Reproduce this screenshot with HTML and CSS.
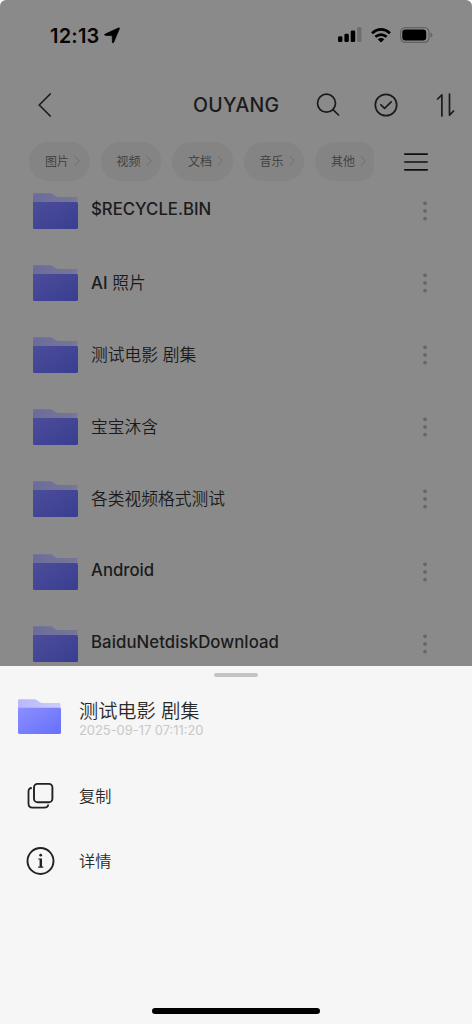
FILE: index.html
```html
<!DOCTYPE html>
<html lang="zh-CN">
<head>
<meta charset="utf-8">
<title>OUYANG</title>
<link rel="stylesheet" href="styles.css">
</head>
<body>
<svg width="0" height="0" class="defs" aria-hidden="true">
  <defs>
    <linearGradient id="dimFront" x1="0" y1="0" x2="1" y2="1"><stop offset="0" stop-color="#4c4d9a"/><stop offset="1" stop-color="#393e91"/></linearGradient>
    <linearGradient id="dimBack" x1="0" y1="0" x2="1" y2="0"><stop offset="0" stop-color="#6c6c9c"/><stop offset="1" stop-color="#777796"/></linearGradient>
    <linearGradient id="front" x1="0" y1="0" x2="1" y2="1"><stop offset="0" stop-color="#8c8eff"/><stop offset="1" stop-color="#6670fa"/></linearGradient>
    <linearGradient id="back" x1="0" y1="0" x2="1" y2="0"><stop offset="0" stop-color="#b7b8fa"/><stop offset="1" stop-color="#cccdfa"/></linearGradient>
    <symbol id="folder-dim" viewBox="0 0 45 36"><path fill="url(#dimBack)" d="M0 12V1.500Q0 .2 1.500 .2H17.500Q19 .2 20 1.200L22.500 3.200Q23.500 4 25 4H43.500Q44.500 4 44.500 5V12Z"/><path fill="url(#dimFront)" d="M0 9H43.500Q45 9 45 10.500V34.500Q45 36 43.500 36H1.500Q0 36 0 34.500Z"/></symbol>
    <symbol id="folder" viewBox="0 0 45 36"><path fill="url(#back)" d="M0 12V1.500Q0 .2 1.500 .2H17.500Q19 .2 20 1.200L22.500 3.200Q23.500 4 25 4H43.500Q44.500 4 44.500 5V12Z"/><path fill="url(#front)" d="M0 9H43.500Q45 9 45 10.500V34.500Q45 36 43.500 36H1.500Q0 36 0 34.500Z"/></symbol>
    <symbol id="chev" viewBox="0 0 6 12"><path d="M.8 1.200L5.200 6L.8 10.800" fill="none" stroke="#707070" stroke-width="1"/></symbol>
    <symbol id="dots" viewBox="0 0 4 20"><g fill="#676767"><circle cx="2" cy="2.300" r="1.900"/><circle cx="2" cy="10" r="1.900"/><circle cx="2" cy="17.600" r="1.900"/></g></symbol>
  </defs>
</svg>
<div class="phone">
  <div class="screen">
    <div class="status">
      <span class="time">12:13</span>
      <svg class="loc" width="16" height="17" viewBox="0 0 16 17"><path d="M14.400 1Q15.800 .4 15.300 1.900L9.600 15.400Q8.800 16.800 8.400 15.200L8.200 9.300Q8.200 8.600 7.500 8.600L1.300 8.400Q-.3 8 1.200 7.100Z" stroke="#000" stroke-width=".7" stroke-linejoin="round"/></svg>
      <span class="fill"></span>
      <svg class="signal" width="24" height="16" viewBox="0 0 24 16"><rect x="0" y="9.300" width="4.400" height="5.700" rx="1.300"/><rect x="6.400" y="6.800" width="4.400" height="8.200" rx="1.300"/><rect x="12.700" y="3.500" width="4.500" height="11.500" rx="1.300"/><rect x="19.200" y="0" width="4.200" height="15" rx="1.300" fill="#6d6d6d"/></svg>
      <svg class="wifi" width="20" height="15" viewBox="0 0 20 15"><g fill="none" stroke="#000" stroke-width="2.700"><path d="M1 5.200Q10-2.400 19 5.200"/><path d="M4.300 8.800Q10 4.400 15.700 8.800"/></g><path d="M6.700 11.300Q10 8.900 13.300 11.300L10.600 14Q10 14.500 9.400 14Z"/></svg>
      <svg class="battery" width="33" height="16" viewBox="0 0 33 16"><rect x=".6" y=".6" width="28.500" height="14.800" rx="4.800" fill="none" stroke="#636363" stroke-width="1.200"/><rect x="2.300" y="2.500" width="23.900" height="11" rx="3.200"/><path d="M30.500 5.500Q32.500 6.300 32.500 8T30.500 10.500Z" fill="#636363"/></svg>
    </div>
    <div class="nav">
      <svg class="back" width="14" height="24" viewBox="0 0 14 24"><path d="M12.200 1L1.200 12L12.200 23" class="line"/></svg>
      <h1 class="title">OUYANG</h1>
      <svg class="search" width="24" height="24" viewBox="0 0 24 24"><circle cx="10.500" cy="10.200" r="9" class="line"/><path d="M17 16.700L22.500 22" class="line"/></svg>
      <svg class="check" width="24" height="24" viewBox="0 0 24 24"><circle cx="12" cy="12" r="10.700" class="line"/><path d="M6.900 11.800L10.600 15.300L17.200 8.900" class="line"/></svg>
      <svg class="sort" width="20" height="24" viewBox="0 0 20 24"><path d="M1.600 6L5.900 1.800V23M13.500 1V22.200L17.600 18" class="line"/></svg>
    </div>
    <div class="filters">
      <span class="pill">图片<svg width="6" height="12"><use href="#chev"/></svg></span>
      <span class="pill">视频<svg width="6" height="12"><use href="#chev"/></svg></span>
      <span class="pill">文档<svg width="6" height="12"><use href="#chev"/></svg></span>
      <span class="pill">音乐<svg width="6" height="12"><use href="#chev"/></svg></span>
      <span class="pill clipped">其他<svg width="6" height="12"><use href="#chev"/></svg></span>
      <svg class="menu" width="24" height="18" viewBox="0 0 24 18"><path d="M.8 1.200H23.200M.8 9H23.200M.8 16.800H23.200" stroke="#111" stroke-width="1.700" stroke-linecap="round"/></svg>
    </div>
    <div class="files">
      <div class="file"><svg width="45" height="36"><use href="#folder-dim"/></svg><span class="name">$RECYCLE.BIN</span><svg width="4" height="20"><use href="#dots"/></svg></div>
      <div class="file"><svg width="45" height="36"><use href="#folder-dim"/></svg><span class="name cjk"><b>AI</b> 照片</span><svg width="4" height="20"><use href="#dots"/></svg></div>
      <div class="file"><svg width="45" height="36"><use href="#folder-dim"/></svg><span class="name cjk">测试电影 剧集</span><svg width="4" height="20"><use href="#dots"/></svg></div>
      <div class="file"><svg width="45" height="36"><use href="#folder-dim"/></svg><span class="name cjk">宝宝沐含</span><svg width="4" height="20"><use href="#dots"/></svg></div>
      <div class="file"><svg width="45" height="36"><use href="#folder-dim"/></svg><span class="name cjk">各类视频格式测试</span><svg width="4" height="20"><use href="#dots"/></svg></div>
      <div class="file"><svg width="45" height="36"><use href="#folder-dim"/></svg><span class="name">Android</span><svg width="4" height="20"><use href="#dots"/></svg></div>
      <div class="file"><svg width="45" height="36"><use href="#folder-dim"/></svg><span class="name long">BaiduNetdiskDownload</span><svg width="4" height="20"><use href="#dots"/></svg></div>
    </div>
  </div>
  <div class="sheet">
    <div class="grabber"></div>
    <div class="head">
      <svg width="43" height="35" viewBox="0 0 45 36" preserveAspectRatio="none"><use href="#folder" width="45" height="36"/></svg>
      <div class="meta"><div class="sheet-title">测试电影 剧集</div><div class="date">2025-09-17 07:11:20</div></div>
    </div>
    <div class="action">
      <svg width="30" height="30" viewBox="0 0 30 30" fill="none" stroke="#222" stroke-width="1.900"><rect x="8" y="2.900" width="18.400" height="18.300" rx="3.500"/><path d="M5.800 7Q2.500 7 2.500 10.500V22.500Q2.500 26.600 6.500 26.600H18Q22.200 26.600 22.200 23.500" stroke-width="1.800"/></svg>
      <span>复制</span>
    </div>
    <div class="action">
      <svg width="30" height="30" viewBox="0 0 30 30"><circle cx="14.500" cy="15" r="13" fill="none" stroke="#222" stroke-width="1.900"/><circle cx="14.700" cy="9.200" r="1.400" fill="#222"/><path d="M12.200 12.500H16V20.600H17.300V21.700H12.200V20.600H13.600V13.600H12.200Z" fill="#222"/></svg>
      <span>详情</span>
    </div>
    <div class="home"></div>
  </div>
</div>
</body>
</html>
```
FILE: styles.css
```css
* { box-sizing: border-box; }
body { margin: 0; background: #fff; font-family: Inter, "Noto Sans CJK SC", sans-serif; }
svg { display: block; flex: none; }
.defs { position: absolute; }
.phone { width: 472px; height: 1024px; display: flex; flex-direction: column; overflow: hidden; }
.screen { height: 665.5px; background: #8a8a8a; border-radius: 6px 6px 0 0; overflow: hidden; flex: none; }
.line { fill: none; stroke: #1b1b1b; stroke-width: 1.7; stroke-linecap: round; stroke-linejoin: round; }
.status { height: 70px; padding: 0 39px 0 50px; display: flex; align-items: center; }
.time { font-size: 20px; font-weight: 600; line-height: 24px; letter-spacing: .2px; color: #050505; padding-top: 1px; }
.loc { margin-left: 5px; }
.fill { flex: 1; }
.wifi { margin-left: 9px; }
.battery { margin-left: 9px; }
.nav { height: 70px; padding-left: 38px; display: flex; align-items: center; }
.back { margin-top: -1px; }
.title { margin: 0 0 0 141px; width: 87px; font-size: 19.5px; line-height: 24px; font-weight: 450; letter-spacing: .3px; color: #1b1b1b; white-space: nowrap; }
.search { margin-left: 36px; }
.check { margin-left: 34px; margin-top: -1px; }
.sort { margin-left: 38px; margin-top: -1px; }
.filters { height: 42px; padding-left: 29px; display: flex; align-items: center; gap: 11px; }
.pill { width: 60.5px; height: 39px; border-radius: 20px; background: #848484; display: flex; align-items: center; gap: 5px; padding: 0 0 1px 16px; font-size: 12px; font-weight: 350; color: #3c3c3c; white-space: nowrap; }
.pill svg { margin-top: 1px; }
.pill.clipped { width: 58.5px; border-radius: 20px 14px 14px 20px; }
.menu { margin: 1px 0 0 19px; }
.files { margin-top: -7px; }
.file { height: 72.1px; padding-left: 33px; display: flex; align-items: center; }
.name { width: 332px; margin: -4px 0 0 13px; font-size: 16.75px; line-height: 24px; font-weight: 500; color: #1b1b1b; white-space: nowrap; }
.name b { font-weight: 450; }
.name.cjk { font-weight: 350; margin-top: -1px; }
.name.long { letter-spacing: .08px; }
.sheet { flex: 1; background: #f6f6f6; display: flex; flex-direction: column; }
.grabber { width: 44px; height: 4px; margin: 7.5px auto 0; border-radius: 2px; background: #c4c4c4; }
.head { height: 79px; margin-bottom: 7px; padding: 0 0 0 17.5px; display: flex; align-items: center; }
.meta { margin-left: 18.5px; padding-top: 4px; }
.sheet-title { font-size: 19.2px; line-height: 24px; font-weight: 350; color: #2a2a2a; }
.date { font-size: 12.9px; line-height: 16px; color: #c8c8c8; }
.action { height: 65px; padding-left: 26px; display: flex; align-items: center; gap: 23px; font-size: 16.2px; font-weight: 350; line-height: 24px; color: #2a2a2a; }
.home { width: 168px; height: 6px; margin: auto auto 10px; border-radius: 3px; background: #000; }
```
